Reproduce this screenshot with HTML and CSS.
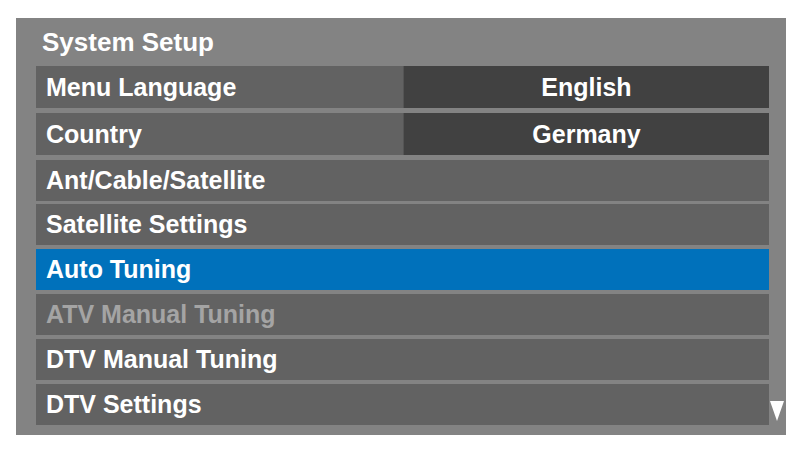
FILE: index.html
```html
<!DOCTYPE html>
<html lang="en">
<head>
<meta charset="utf-8">
<title>System Setup</title>
<link rel="stylesheet" href="styles.css">
</head>
<body>
  <div class="panel">
    <div class="title">System Setup</div>
    <div class="list">
      <div class="row val"><div class="label">Menu Language</div><div class="value">English</div></div>
      <div class="row val"><div class="label">Country</div><div class="value">Germany</div></div>
      <div class="row"><div class="label">Ant/Cable/Satellite</div></div>
      <div class="row"><div class="label">Satellite Settings</div></div>
      <div class="row active"><div class="label">Auto Tuning</div></div>
      <div class="row disabled"><div class="label">ATV Manual Tuning</div></div>
      <div class="row"><div class="label">DTV Manual Tuning</div></div>
      <div class="row"><div class="label">DTV Settings</div></div>
    </div>
    <svg class="more" width="14" height="20" viewBox="0 0 14 20"><polygon points="0,0 14,0 7,20" fill="#ffffff"/></svg>
  </div>
</body>
</html>
```
FILE: styles.css
```css
html, body {
  margin: 0;
  padding: 0;
  background: #ffffff;
}
body {
  font-family: "Liberation Sans", Arial, sans-serif;
  font-weight: bold;
  color: #ffffff;
}
.panel {
  position: relative;
  margin: 18px 0 0 16px;
  width: 770px;
  height: 417px;
  box-sizing: border-box;
  background: #838383;
  padding: 9px 17px 0 20px;
}
.title {
  font-size: 26px;
  line-height: 30px;
  padding-left: 6px;
  margin-bottom: 9px;
}
.list {
  display: flex;
  flex-direction: column;
  gap: 3.8px;
}
.row {
  display: grid;
  grid-template-columns: 1fr;
  height: 41px;
  background: #626262;
  font-size: 25px;
  line-height: 41px;
}
.row.val {
  grid-template-columns: 367px 1fr;
  height: 42px;
  line-height: 42px;
  margin-bottom: 1px;
}
.label {
  padding-left: 10px;
  white-space: nowrap;
}
.value {
  background: #414141;
  text-align: center;
  border-left: 1px solid #555555;
}
.row.active {
  background: #0071bb;
}
.row.disabled {
  color: #a4a4a4;
}
.more {
  position: absolute;
  right: 2px;
  top: 383px;
}
```
